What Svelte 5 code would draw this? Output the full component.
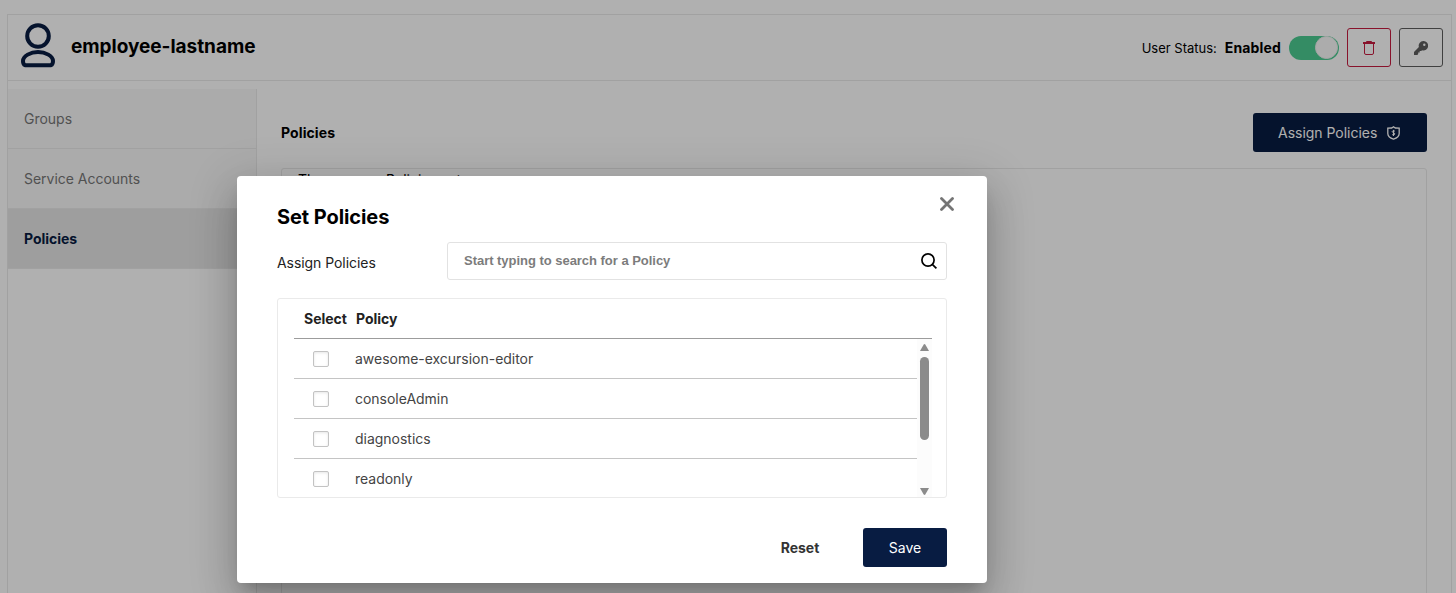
<script>
  const tabs = ['Groups', 'Service Accounts', 'Policies'];
  const policies = ['awesome-excursion-editor', 'consoleAdmin', 'diagnostics', 'readonly'];
  let active = $state('Policies');
  let checked = $state({});
  let query = $state('');
</script>

<div class="page">
  <div class="card">
    <header>
      <svg class="avatar" viewBox="0 0 34 46" width="34" height="46" fill="none" stroke="#081c42" stroke-width="4">
        <circle cx="17" cy="13" r="10.8" />
        <path d="M4 42.2C2.6 41.6 2 40 2 38C2 33 9.5 29 17 29S32 33 32 38C32 40 31.400 41.600 30 42.200Z" stroke-linejoin="round" />
      </svg>
      <h1>employee-lastname</h1>
      <div class="status">
        <span class="label">User Status:</span>
        <b>Enabled</b>
        <span class="switch"><i></i></span>
        <button class="icon danger" aria-label="Delete user">
          <svg width="12" height="14" viewBox="0 0 12 14" fill="none" stroke="currentColor">
            <path d="M0 2H12" stroke-width="2" />
            <path d="M3.500 1V.5H8.500V1M1.500 3V12Q1.500 13.500 3 13.500H9Q10.500 13.500 10.500 12V3" />
          </svg>
        </button>
        <button class="icon" aria-label="Change password">
          <svg width="14" height="14" viewBox="0 0 14 14">
            <path fill="currentColor" fill-rule="evenodd" d="M9.300 0A4.700 4.700 0 1 1 8.100 9.200L7.200 10.100H5.700V11.600H4.200V13.100L3.300 14H0V11L4.900 6.100A4.700 4.700 0 0 1 9.300 0ZM10.300 2.500A1.200 1.200 0 1 0 10.300 4.900A1.200 1.200 0 1 0 10.300 2.500Z" />
          </svg>
        </button>
      </div>
    </header>
    <div class="body">
      <nav>
        {#each tabs as tab}
          <button class="tab" class:active={active === tab} onclick={() => (active = tab)}>{tab}</button>
        {/each}
      </nav>
      <main>
        <div class="title">
          <h2>Policies</h2>
          <button class="primary assign">
            Assign Policies
            <svg width="13" height="14" viewBox="0 0 13 14" fill="none" stroke="currentColor" stroke-width="1.300">
              <path d="M6.500 .8L8.300 2L12.200 2.200V7.500C12.200 10.300 9.500 12.200 6.500 13.200C3.500 12.200 .8 10.300 .8 7.500V2.200L4.700 2Z" />
              <path d="M7.900 5.100Q5.200 4.200 5.200 5.600C5.200 6.800 7.900 6.500 7.900 8Q7.600 9.400 5.200 8.700M6.500 3.900V10" stroke-width="1" />
            </svg>
          </button>
        </div>
        <div class="empty">There are no Policies yet.</div>
      </main>
    </div>
  </div>
</div>

<div class="backdrop">
  <div class="dialog" role="dialog" aria-label="Set Policies">
    <div class="dialog-head">
      <h3>Set Policies</h3>
      <button class="close" aria-label="Close">
        <svg width="14" height="14" viewBox="0 0 14 14" stroke="currentColor" stroke-width="2.800" stroke-linecap="round">
          <path d="M1.500 1.500L12.500 12.500M12.500 1.500L1.500 12.500" />
        </svg>
      </button>
    </div>
    <div class="search-row">
      <span>Assign Policies</span>
      <div class="search">
        <input placeholder="Start typing to search for a Policy" bind:value={query} />
        <svg width="16" height="16" viewBox="0 0 16 16" fill="none" stroke="#000" stroke-width="1.700">
          <circle cx="7" cy="7" r="6.100" />
          <path d="M11.300 11.300L15.400 15.400" />
        </svg>
      </div>
    </div>
    <div class="table">
      <div class="table-head"><span>Select</span><span>Policy</span></div>
      <div class="table-body">
        <div class="rows">
          {#each policies as policy}
            <label class="row">
              <input type="checkbox" bind:checked={checked[policy]} />
              <span>{policy}</span>
            </label>
          {/each}
        </div>
        <div class="scrollbar">
          <svg width="9" height="7" viewBox="0 0 9 7"><path d="M3.700 .5Q4.500 -.3 5.300 .5L9 7H0Z" fill="#8b8b8b" /></svg>
          <i></i>
          <svg class="down" width="9" height="7" viewBox="0 0 9 7"><path d="M0 0H9L5.300 6.500Q4.500 7.300 3.700 6.500Z" fill="#8b8b8b" /></svg>
        </div>
      </div>
    </div>
    <div class="actions">
      <button class="reset">Reset</button>
      <button class="primary save">Save</button>
    </div>
  </div>
</div>

<style>
  :global(body) { margin: 0; background: #fff; overflow: hidden; }
  * { box-sizing: border-box; }
  .page, .backdrop { font-family: Inter, sans-serif; font-size: 14px; letter-spacing: -.02px; color: #000; }
  button { font: inherit; letter-spacing: inherit; cursor: pointer; margin: 0; }
  svg { display: block; flex: none; }
  h1, h2, h3 { margin: 0; }
  .page { height: 593px; padding: 14px 4px 0 7px; overflow: hidden; }
  .card { height: 620px; border: 1px solid #eaeaea; display: flex; flex-direction: column; }
  header { height: 66px; flex: none; border-bottom: 1px solid #eaeaea; display: flex; align-items: center; padding: 0 8px 0 13px; }
  .avatar { margin-top: -3px; }
  h1 { font-size: 19px; line-height: 24px; font-weight: 700; letter-spacing: -.03px; margin: -2px 0 0 16px; }
  .status { margin-left: auto; display: flex; align-items: center; }
  .label { font-size: 13px; letter-spacing: 0; }
  .status b { font-size: 14px; font-weight: 700; letter-spacing: .15px; margin: 0 8px 0 8px; }
  .switch { width: 50px; height: 24px; border-radius: 12px; background: #4ccb92; display: flex; justify-content: flex-end; align-items: center; padding-right: 1px; margin-right: 8px; }
  .switch i { width: 23px; height: 23px; border-radius: 50%; background: #fafafa; border: 1px solid #eee; }
  .icon { width: 44px; height: 39px; border: 1px solid #5e5e5e; border-radius: 3px; background: none; color: #5e5e5e; display: flex; align-items: center; justify-content: center; padding: 0; }
  .danger { color: #c51b3f; border-color: #c51b3f; margin-right: 8px; }
  .body { flex: 1; display: flex; padding-top: 8px; }
  nav { width: 249px; border-right: 1px solid #eaeaea; }
  .tab { display: block; width: 100%; height: 60px; text-align: left; padding: 0 16px; border: 0; border-bottom: 1px solid #eaeaea; background: #f8f8f8; color: #767676; }
  .tab.active { background: #e5e5e5; color: #081c42; font-weight: 700; }
  main { flex: 1; padding: 24px 24px 0; display: flex; flex-direction: column; }
  .title { display: flex; align-items: center; justify-content: space-between; height: 39px; }
  h2 { font-size: 14px; font-weight: 700; letter-spacing: .1px; }
  .primary { background: #081c42; color: #fff; border: 0; border-radius: 3px; height: 39px; }
  .assign { width: 174px; display: flex; align-items: center; justify-content: flex-start; gap: 10px; padding: 0 0 0 25px; }
  .empty { flex: 1; border: 1px solid #eaeaea; border-radius: 3px; margin-top: 16px; padding: 2px 16px; line-height: 17px; }
  .backdrop { position: absolute; inset: 0; background: rgba(0, 0, 0, .31); display: flex; padding: 176px 0 0 237px; }
  .dialog { width: 750px; height: 407px; background: #fff; border-radius: 4px; padding: 20px 40px 16px; box-shadow: 0 11px 15px -7px rgba(0,0,0,.2), 0 24px 38px 3px rgba(0,0,0,.14), 0 9px 46px 8px rgba(0,0,0,.12); }
  .dialog-head { display: flex; justify-content: space-between; height: 46px; }
  h3 { font-size: 20px; line-height: 24px; font-weight: 700; letter-spacing: -.08px; margin-top: 9px; }
  .close { background: none; border: 0; padding: 0; color: #757575; align-self: flex-start; margin: 1px -7px 0 0; }
  .search-row { display: flex; justify-content: space-between; height: 38px; color: #222; }
  .search-row span { line-height: 17px; margin-top: 12px; letter-spacing: -.06px; }
  .search { width: 500px; border: 1px solid #e2e2e2; border-radius: 3px; display: flex; align-items: center; padding: 0 9px 0 16px; }
  .search input { flex: 1; border: 0; outline: 0; padding: 0 0 2px; font: 700 13px "Liberation Sans", sans-serif; letter-spacing: -.03px; color: #333; background: none; }
  .search input::placeholder { color: #7c7c7c; opacity: 1; }
  .table { margin-top: 18px; height: 200px; border: 1px solid #eaeaea; border-radius: 3px; padding: 0 14px 0 16px; overflow: hidden; }
  .table-head { height: 40px; border-bottom: 1px solid #9c9c9c; display: flex; align-items: center; font-weight: 700; color: #222; padding: 0 0 0 10px; }
  .table-head span:first-child { width: 52px; }
  .table-body { display: flex; height: 158px; overflow: hidden; }
  .rows { flex: 1; }
  .row { height: 40px; display: flex; align-items: center; border-bottom: 1px solid #c4c4c4; padding-left: 19px; color: #444; }
  .row input { appearance: none; width: 16px; height: 16px; margin: 0 26px 0 0; border: 1px solid #c3c3c3; border-radius: 2px; background: #fff; box-shadow: inset 0 1px 3px rgba(0,0,0,.1); }
  .row input:checked { background: #081c42; }
  .scrollbar { width: 15px; background: #fcfcfc; display: flex; flex-direction: column; align-items: center; padding: 5px 0 2px; }
  .scrollbar i { width: 9px; height: 83px; border-radius: 5px; background: #8b8b8b; margin-top: 6px; }
  .down { margin-top: auto; }
  .actions { display: flex; justify-content: flex-end; margin-top: 30px; }
  .reset { width: 84px; border: 0; background: none; color: #333; font-weight: 700; margin-right: 21px; padding: 0; }
  .save { width: 84px; }
</style>
